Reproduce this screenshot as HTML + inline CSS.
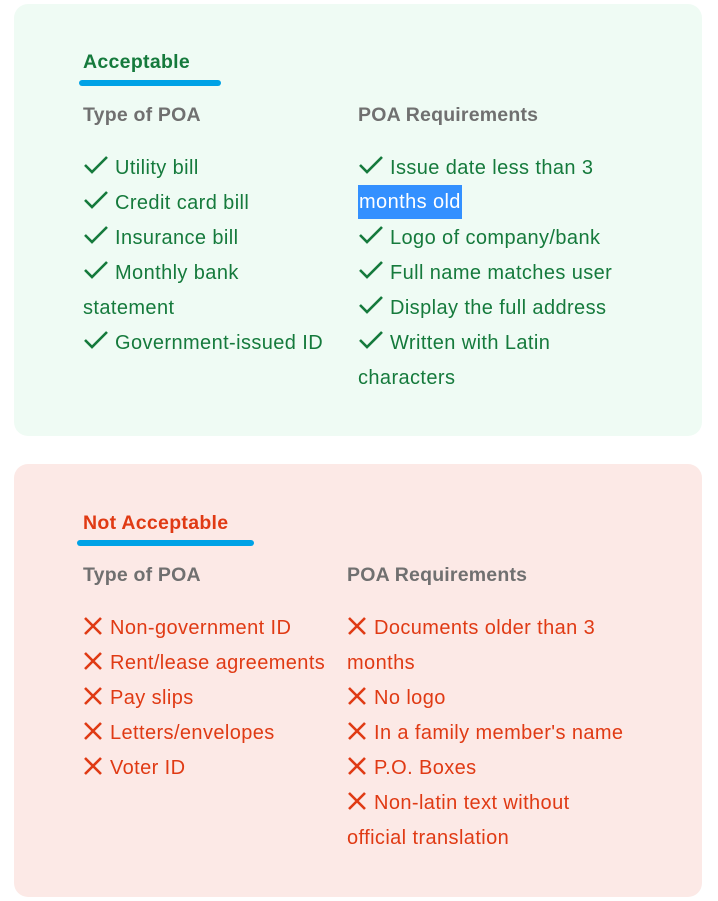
<!DOCTYPE html>
<html><head><style>
body{margin:0;background:#fff;width:718px;height:901px;position:relative;font-family:"Liberation Sans",sans-serif;overflow:hidden}
.card{position:absolute;left:14px;width:688px;border-radius:14px}
.g{top:4px;height:432px;background:#effbf4}
.r{top:464px;height:433px;background:#fce9e6}
.t{position:absolute;font-size:20px;line-height:35px;white-space:nowrap;letter-spacing:0.4px;margin-top:2px}
.gc{color:#157a3c}.rc{color:#e03a14}
.h{color:#707070;font-weight:bold;font-size:19.5px;letter-spacing:0.2px}
.ttl{font-weight:bold;font-size:19.5px;letter-spacing:0.3px}
.bar{position:absolute;height:6px;border-radius:3px;background:#00a2e6}
svg{position:absolute}
.hl{background:#3390ff;color:#fff;padding:0 1px;display:inline-block;line-height:34px}
</style></head><body>
<div class="card g"></div>
<div class="card r"></div>

<div class="t gc ttl" style="left:83px;top:43px">Acceptable</div>
<div class="bar" style="left:79px;top:80px;width:142px"></div>
<div class="t h" style="left:83px;top:96px">Type of POA</div>
<div class="t h" style="left:358px;top:96px">POA Requirements</div>

<div class="t gc" style="left:83px;top:149px"><span style="padding-left:32px">Utility bill</span></div>
<div class="t gc" style="left:83px;top:184px"><span style="padding-left:32px">Credit card bill</span></div>
<div class="t gc" style="left:83px;top:219px"><span style="padding-left:32px">Insurance bill</span></div>
<div class="t gc" style="left:83px;top:254px"><span style="padding-left:32px">Monthly bank</span></div>
<div class="t gc" style="left:83px;top:289px">statement</div>
<div class="t gc" style="left:83px;top:324px"><span style="padding-left:32px">Government-issued ID</span></div>

<div class="t gc" style="left:358px;top:149px"><span style="padding-left:32px">Issue date less than 3</span></div>
<div class="t gc" style="left:358px;top:183px"><span class="hl">months old</span></div>
<div class="t gc" style="left:358px;top:219px"><span style="padding-left:32px">Logo of company/bank</span></div>
<div class="t gc" style="left:358px;top:254px"><span style="padding-left:32px">Full name matches user</span></div>
<div class="t gc" style="left:358px;top:289px"><span style="padding-left:32px">Display the full address</span></div>
<div class="t gc" style="left:358px;top:324px"><span style="padding-left:32px">Written with Latin</span></div>
<div class="t gc" style="left:358px;top:359px">characters</div>

<svg width="0" height="0"><defs>
<symbol id="ck" viewBox="0 0 26 20"><path d="M2 10 L9 17 L24 2" fill="none" stroke="#157a3c" stroke-width="2.6"/></symbol>
<symbol id="x" viewBox="0 0 20 20"><path d="M2 2 L18 18 M18 2 L2 18" fill="none" stroke="#e03a14" stroke-width="2.6"/></symbol>
</defs></svg>
<svg style="left:83px;top:155px" width="26" height="20"><use href="#ck"/></svg>
<svg style="left:83px;top:190px" width="26" height="20"><use href="#ck"/></svg>
<svg style="left:83px;top:225px" width="26" height="20"><use href="#ck"/></svg>
<svg style="left:83px;top:260px" width="26" height="20"><use href="#ck"/></svg>
<svg style="left:83px;top:330px" width="26" height="20"><use href="#ck"/></svg>
<svg style="left:358px;top:155px" width="26" height="20"><use href="#ck"/></svg>
<svg style="left:358px;top:225px" width="26" height="20"><use href="#ck"/></svg>
<svg style="left:358px;top:260px" width="26" height="20"><use href="#ck"/></svg>
<svg style="left:358px;top:295px" width="26" height="20"><use href="#ck"/></svg>
<svg style="left:358px;top:330px" width="26" height="20"><use href="#ck"/></svg>

<div class="t rc ttl" style="left:83px;top:504px">Not Acceptable</div>
<div class="bar" style="left:77px;top:540px;width:177px"></div>
<div class="t h" style="left:83px;top:556px">Type of POA</div>
<div class="t h" style="left:347px;top:556px">POA Requirements</div>

<div class="t rc" style="left:83px;top:609px"><span style="padding-left:27px">Non-government ID</span></div>
<div class="t rc" style="left:83px;top:644px"><span style="padding-left:27px">Rent/lease agreements</span></div>
<div class="t rc" style="left:83px;top:679px"><span style="padding-left:27px">Pay slips</span></div>
<div class="t rc" style="left:83px;top:714px"><span style="padding-left:27px">Letters/envelopes</span></div>
<div class="t rc" style="left:83px;top:749px"><span style="padding-left:27px">Voter ID</span></div>

<div class="t rc" style="left:347px;top:609px"><span style="padding-left:27px">Documents older than 3</span></div>
<div class="t rc" style="left:347px;top:644px">months</div>
<div class="t rc" style="left:347px;top:679px"><span style="padding-left:27px">No logo</span></div>
<div class="t rc" style="left:347px;top:714px"><span style="padding-left:27px">In a family member's name</span></div>
<div class="t rc" style="left:347px;top:749px"><span style="padding-left:27px">P.O. Boxes</span></div>
<div class="t rc" style="left:347px;top:784px"><span style="padding-left:27px">Non-latin text without</span></div>
<div class="t rc" style="left:347px;top:819px">official translation</div>

<svg style="left:83px;top:616px" width="20" height="20"><use href="#x"/></svg>
<svg style="left:83px;top:651px" width="20" height="20"><use href="#x"/></svg>
<svg style="left:83px;top:686px" width="20" height="20"><use href="#x"/></svg>
<svg style="left:83px;top:721px" width="20" height="20"><use href="#x"/></svg>
<svg style="left:83px;top:756px" width="20" height="20"><use href="#x"/></svg>
<svg style="left:347px;top:616px" width="20" height="20"><use href="#x"/></svg>
<svg style="left:347px;top:686px" width="20" height="20"><use href="#x"/></svg>
<svg style="left:347px;top:721px" width="20" height="20"><use href="#x"/></svg>
<svg style="left:347px;top:756px" width="20" height="20"><use href="#x"/></svg>
<svg style="left:347px;top:791px" width="20" height="20"><use href="#x"/></svg>
</body></html>
